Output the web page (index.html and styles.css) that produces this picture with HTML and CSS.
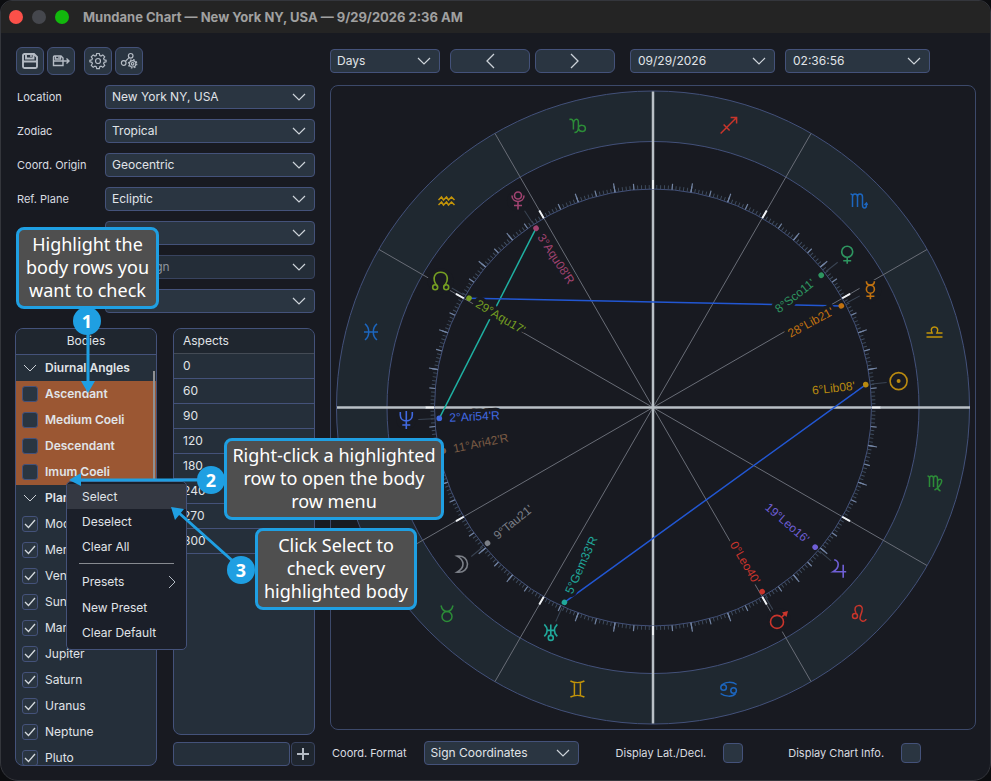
FILE: index.html
```html
<!DOCTYPE html>
<html lang="en">
<head>
<meta charset="utf-8">
<title>Mundane Chart</title>
<link rel="stylesheet" href="styles.css">
</head>
<body>
<div class="window">
  <header class="titlebar">
    <button class="light light-close" aria-label="Close"></button>
    <button class="light light-min" aria-label="Minimize"></button>
    <button class="light light-zoom" aria-label="Zoom"></button>
    <h1>Mundane Chart — New York NY, USA — 9/29/2026 2:36 AM</h1>
  </header>

  <main class="content">
    <section class="side">
      <div class="tools">
        <button class="tool" aria-label="Save">
          <svg width="20" height="20" viewBox="0 0 20 20"><path d="M4.500 3h9.500l3 3v9.500a1.500 1.500 0 0 1-1.500 1.500h-11a1.500 1.500 0 0 1-1.500-1.500v-11a1.500 1.500 0 0 1 1.500-1.500zM6 3v4.500h7.500v-4.500M3 10.500h14" stroke-width="1.900"/><path d="M11 4v2" stroke-width="1.500"/></svg>
        </button>
        <button class="tool" aria-label="Save as">
          <svg width="20" height="20" viewBox="0 0 20 20"><path d="M3.500 5h6.500l2 2v7.500h-9.500v-8.500a1 1 0 0 1 1-1zM4.500 5v3h5v-3M2.500 10h9.500" stroke-width="1.400"/><path d="M8 5.500v1.500M12 10h6M15.500 7.500l2.500 2.500-2.500 2.500" stroke-width="1.400"/></svg>
        </button>
        <button class="tool tool-gap" aria-label="Settings">
          <svg width="20" height="20" viewBox="0 0 20 20"><circle cx="10" cy="10" r="2.500" stroke-width="1.200"/><path d="M8.700 2.500h2.600l.5 2 1.200.5 1.800-1.100 1.900 1.900-1.100 1.800.5 1.200 2 .5v1.500l-2 .5-.5 1.200 1.100 1.800-1.900 1.900-1.800-1.100-1.200.5-.5 2h-2.600l-.5-2-1.200-.5-1.800 1.100-1.900-1.900 1.100-1.800-.5-1.200-2-.5v-1.500l2-.5.5-1.200-1.100-1.800 1.900-1.900 1.800 1.100 1.200-.5z" stroke-width="1.200"/></svg>
        </button>
        <button class="tool" aria-label="Aspect settings">
          <svg width="20" height="20" viewBox="0 0 20 20" stroke-width="1.200"><circle cx="4.700" cy="12" r="2.300"/><circle cx="11.700" cy="4.800" r="2.300"/><path d="M6.400 10.300l3.600-3.700"/><circle cx="13.600" cy="12.800" r="1.300"/><circle cx="13.600" cy="12.800" r="3.200"/><circle cx="13.600" cy="12.800" r="4.200" stroke-dasharray="1.600 1.700"/></svg>
        </button>
      </div>

      <div class="form">
        <label for="location">Location</label>
        <select id="location"><option>New York NY, USA</option></select>
        <label for="zodiac">Zodiac</label>
        <select id="zodiac"><option>Tropical</option></select>
        <label for="origin">Coord. Origin</label>
        <select id="origin"><option>Geocentric</option></select>
        <label for="plane">Ref. Plane</label>
        <select id="plane"><option>Ecliptic</option></select>
        <select class="unlabelled" aria-label="Houses"><option></option></select>
        <select class="unlabelled" aria-label="Start" disabled><option>Aries Sign</option></select>
        <select class="unlabelled" aria-label="Node"><option></option></select>
      </div>

      <div class="lists">
        <div class="panel bodies">
          <h2 class="panel-head">Bodies</h2>
          <div class="tree">
            <div class="row group"><svg class="twist" width="14" height="8" viewBox="0 0 14 8"><path d="M1 1l6 6 6-6"/></svg>Diurnal Angles</div>
            <label class="row picked"><input type="checkbox">Ascendant</label>
            <label class="row picked"><input type="checkbox">Medium Coeli</label>
            <label class="row picked"><input type="checkbox">Descendant</label>
            <label class="row picked"><input type="checkbox">Imum Coeli</label>
            <div class="row group"><svg class="twist" width="14" height="8" viewBox="0 0 14 8"><path d="M1 1l6 6 6-6"/></svg>Planets</div>
            <label class="row"><input type="checkbox" checked>Moon</label>
            <label class="row"><input type="checkbox" checked>Mercury</label>
            <label class="row"><input type="checkbox" checked>Venus</label>
            <label class="row"><input type="checkbox" checked>Sun</label>
            <label class="row"><input type="checkbox" checked>Mars</label>
            <label class="row"><input type="checkbox" checked>Jupiter</label>
            <label class="row"><input type="checkbox" checked>Saturn</label>
            <label class="row"><input type="checkbox" checked>Uranus</label>
            <label class="row"><input type="checkbox" checked>Neptune</label>
            <label class="row"><input type="checkbox" checked>Pluto</label>
            <span class="thumb"></span>
          </div>
        </div>

        <div class="aspects">
          <div class="panel aspect-panel">
            <table>
              <thead><tr><th scope="col">Aspects</th></tr></thead>
              <tbody>
                <tr><td>0</td></tr><tr><td>60</td></tr><tr><td>90</td></tr><tr><td>120</td></tr>
                <tr><td>180</td></tr><tr><td>240</td></tr><tr><td>270</td></tr><tr><td>300</td></tr>
              </tbody>
            </table>
          </div>
          <div class="add">
            <input type="text" aria-label="New aspect">
            <button aria-label="Add aspect"><svg width="14" height="14" viewBox="0 0 14 14"><path d="M7 1v12M1 7h12" stroke-width="2"/></svg></button>
          </div>
        </div>
      </div>
    </section>

    <section class="main">
      <div class="timebar">
        <select class="unit" aria-label="Step unit"><option>Days</option></select>
        <button class="step step-prev" aria-label="Previous"><svg width="10" height="16" viewBox="0 0 10 16"><path d="M9 1L2 8l7 7"/></svg></button>
        <button class="step" aria-label="Next"><svg width="10" height="16" viewBox="0 0 10 16"><path d="M1 1l7 7-7 7"/></svg></button>
        <select class="date" aria-label="Date"><option>09/29/2026</option></select>
        <select class="time" aria-label="Time"><option>02:36:56</option></select>
      </div>

      <div class="chart">
        <svg viewBox="-322 -321.500 644 643" role="img" aria-label="Chart wheel">
          <circle class="band" r="291.250"/>
          <circle class="ring" r="316.500"/>
          <circle class="ring" r="266"/>
          <g class="cusp">
            <path d="M-274-158L274 158M-158-274L158 274M158-274L-158 274M274-158L-274 158"/>
          </g>
          <path class="axis" d="M-316 0H317M0-316V316"/>
          <circle class="ring" r="218.500"/>
          <circle class="tick1" r="220.500" pathLength="360"/>
          <circle class="tick5" r="221.500" pathLength="360"/>
          <circle class="tick10" r="223" pathLength="360"/>
          <circle class="tick30" r="223" pathLength="360"/>

          <g class="aspect">
            <path class="teal" d="M-117-179.200L-213.700 10.800"/>
            <path class="blue" d="M-184-109.300L188.300-101.600M212.800-22.900L-88.600 194.800"/>
          </g>

          <g class="signs">
            <g class="earth" transform="translate(-75.600 -282)"><path d="M-8-6c3-1 4 1 4 4v6M-4-1c0-6 5-7 5-2v5c0 3-1 5-4 5M1 2c1-3 7-3 7 1 0 4-6 4-7 0"/></g>
            <g class="fire" transform="translate(75.600 -282)"><path d="M-8 8L8-8M2-8h6v6M-5-1l6 6"/></g>
            <g class="air" transform="translate(-206.500 -206.500)"><path d="M-8-1l3-3 2 3 3-3 2 3 3-3 3 3M-8 4l3-3 2 3 3-3 2 3 3-3 3 3"/></g>
            <g class="water" transform="translate(205.500 -206.500)"><path d="M-8-7c2 0 2 1 2 3v10M-6-4c0-4 5-4 5 0v10M-1-4c0-4 5-4 5 0v8c0 4 4 4 4 0v-1M6 4l2-2 1 2"/></g>
            <g class="water" transform="translate(-282 -75.600)"><path d="M-6-8c5 4 5 12 0 16M6-8c-5 4-5 12 0 16M-7 0h14"/></g>
            <g class="air" transform="translate(281.500 -75.600)"><path d="M-8 5h16M-8 1h5.500c-4-8 9-8 5 0h5.500"/></g>
            <g class="earth" transform="translate(281.500 75.600)"><path d="M-7-7c2 0 2 1 2 3v8M-5-4c0-4 4-4 4 0v8M-1-4c0-4 4-4 4 0v8c0 2 1 3 3 4M3-2c2-3 5-2 4 1-1 4-4 6-7 8"/></g>
            <g class="fire" transform="translate(206 206.500)"><circle cx="-4" cy="2" r="2.500"/><path d="M-3-1c-5-9 9-10 6-2-1 4-4 9 0 10 2 1 4-1 4-2"/></g>
            <g class="water" transform="translate(75.600 281)"><circle cx="-5" cy="-1" r="2.800"/><circle cx="5" cy="2" r="2.800"/><path d="M-7-3c3-4 11-4 15-1M7 5c-3 4-11 3-15 0"/></g>
            <g class="air" transform="translate(-75.600 281.500)"><path d="M-7-8c4 2 10 2 14 0M-7 8c4-2 10-2 14 0M-3-7v14M3-7v14"/></g>
            <g class="earth" transform="translate(-206 206)"><circle cy="3" r="5"/><path d="M-6-8c1 4 3 6 6 6s5-2 6-6"/></g>
            <g class="fire" transform="translate(-282 75.600)"><path d="M-7-3c-1-6 7-6 7 2v8c0 0 0-4 0-8 0-8 8-8 7-2"/></g>
          </g>

          <g class="body pluto"><g transform="rotate(-303.130)"><path class="lead" d="M-220 0h-15"/><circle class="dot" cx="-214" r="2.800"/><text x="-206" y="4">3°Aqu08'R</text></g>
            <g transform="translate(-135 -207)"><circle class="mask" r="11"/><path d="M-6-5c0 8 12 8 12 0M0 1v8M-4 5h8"/><circle cy="-5" r="3.500"/></g></g>
          <g class="body node"><g transform="rotate(-329.280)"><path class="lead" d="M-220 0h-15"/><circle class="dot" cx="-214" r="2.800"/><text x="-205" y="4">29°Aqu17'</text></g>
            <g transform="translate(-212.300 -126.200)"><circle class="mask" r="13"/><path d="M-3.500 5C-10-4-5-9 0-9s10 5 3.500 14"/><circle cx="-5.500" cy="6" r="2.500"/><circle cx="5.500" cy="6" r="2.500"/></g></g>
          <g class="body neptune"><g transform="rotate(-2.900)"><path class="lead" d="M-220 0h-15"/><circle class="dot" cx="-214" r="2.800"/><text x="-204" y="4">2°Ari54'R</text></g>
            <g transform="translate(-246.700 12.500)"><circle class="mask" r="10"/><path d="M-6-8v3c0 8 12 8 12 0v-3M0-9v18M-4 5h8"/></g></g>
          <g class="body chiron"><g transform="rotate(-11.700)"><circle class="dot" cx="-214" r="2.800"/><text x="-204" y="4">11°Ari42'R</text></g></g>
          <g class="body moon"><g transform="rotate(-39.350)"><path class="lead" d="M-220 0h-15"/><circle class="dot" cx="-214" r="2.800"/><text x="-204" y="4">9°Tau21'</text></g>
            <g transform="translate(-191 156.600)"><path d="M-5-8c14-2 14 18 0 16 8-4 8-12 0-16z"/></g></g>
          <g class="body uranus"><g transform="rotate(-65.550)"><path class="lead" d="M-220 0h-15"/><circle class="dot" cx="-214" r="2.800"/><text x="-204" y="4">5°Gem33'R</text></g>
            <g transform="translate(-102.200 224.900)"><path d="M-6.500-8c4 4 4 8 0 12M6.500-8c-4 4-4 8 0 12M-4-2h8M0-8v11"/><circle cy="5.500" r="2.500"/></g></g>
          <g class="body mars"><g transform="rotate(59.330)"><path class="lead" d="M220 0h15"/><circle class="dot" cx="214" r="2.800"/><text class="far" x="204" y="4">0°Leo40'</text></g>
            <g transform="translate(126 212.400)"><circle class="mask" r="12"/><circle cx="-2" cy="2" r="6.500"/><path d="M3-3l3-3"/><path class="dot" d="M3-7.500l6-1.500-1.500 6z"/></g></g>
          <g class="body jupiter"><g transform="rotate(40.730)"><path class="lead" d="M220 0h15"/><circle class="dot" cx="214" r="2.800"/><text class="far" x="204" y="4">19°Leo16'</text></g>
            <g transform="translate(187.200 161.200)"><path d="M-6-9c5 1 6 8-1 12h13M3-4v13"/></g></g>
          <g class="body sun"><g transform="rotate(-6.130)"><path class="lead" d="M220 0h15"/><circle class="dot" cx="214" r="2.800"/><text class="far" x="203" y="4">6°Lib08'</text></g>
            <g transform="translate(245.600 -26.400)"><circle r="8.500"/><circle class="dot" r="2"/></g></g>
          <g class="body mercury"><g transform="rotate(-28.350)"><path class="lead" d="M220 0h15"/><circle class="dot" cx="214" r="2.800"/><text class="far" x="204" y="4">28°Lib21'</text></g>
            <g transform="translate(217.400 -117.300)"><circle class="mask" r="11"/><circle cy="-1" r="4"/><path d="M-4-9c0 5 8 5 8 0M0 3v6M-4 6h8"/></g></g>
          <g class="body venus"><g transform="rotate(-38.180)"><path class="lead" d="M220 0h15"/><circle class="dot" cx="214" r="2.800"/><text class="far" x="204" y="4">8°Sco11'</text></g>
            <g transform="translate(194.200 -152.700)"><circle cy="-3" r="5.500"/><path d="M0 3v6M-4 6h8"/></g></g>
        </svg>
      </div>

      <div class="footbar">
        <label for="format">Coord. Format</label>
        <select id="format"><option>Sign Coordinates</option></select>
        <label for="lat">Display Lat./Decl.</label>
        <input id="lat" type="checkbox">
        <label for="info">Display Chart Info.</label>
        <input id="info" type="checkbox">
      </div>
    </section>
  </main>

  <menu class="context">
    <li><button class="active">Select</button></li>
    <li><button>Deselect</button></li>
    <li><button>Clear All</button></li>
    <li class="rule" role="separator"></li>
    <li><button class="submenu">Presets<svg width="8" height="14" viewBox="0 0 8 14"><path d="M1 1l6 6-6 6"/></svg></button></li>
    <li><button>New Preset</button></li>
    <li><button>Clear Default</button></li>
  </menu>

  <svg class="arrows" width="300" height="400" viewBox="0 250 300 400">
    <path d="M88 330v54M205 480H78M235 563L179 513"/>
    <path class="tip" d="M81 381h14l-7 12zM81 473v13l-12-6zM171 507l13 2-9 11z"/>
  </svg>
  <p class="callout callout-1">Highlight the<br>body rows you<br>want to check</p>
  <p class="callout callout-2">Right-click a highlighted<br>row to open the body<br>row menu</p>
  <p class="callout callout-3">Click Select to<br>check every<br>highlighted body</p>
  <span class="badge badge-1">1</span>
  <span class="badge badge-2">2</span>
  <span class="badge badge-3">3</span>
</div>
</body>
</html>
```
FILE: styles.css
```css
:root {
  --bg: #181a21;
  --field: #2a3541;
  --list: #252f3a;
  --head: #1f262f;
  --line: #44527a;
  --text: #e0e4e8;
  --icon: #b4bbc4;
  --call: #1f9fe2;
  --chevron: url("data:image/svg+xml,%3Csvg xmlns='http://www.w3.org/2000/svg' width='14' height='8' viewBox='0 0 14 8'%3E%3Cpath d='M1 1l6 6 6-6' fill='none' stroke='%23ccd2d8' stroke-width='1.2'/%3E%3C/svg%3E");
}

* { box-sizing: border-box; }

body {
  margin: 0;
  background: #0c0d10;
  color: var(--text);
  font: 12px/16px Inter, "Liberation Sans", sans-serif;
}

button, select, input { font: inherit; color: inherit; margin: 0; }

.window {
  position: relative;
  display: flex;
  flex-direction: column;
  min-height: 100vh;
  background: var(--bg);
  border: 1px solid #34363c;
  border-radius: 12px 12px 18px 18px;
  overflow: hidden;
}

.titlebar {
  display: flex;
  align-items: center;
  gap: 9px;
  height: 32px;
  padding: 0 8px;
  background: #242424;
}

.titlebar h1 {
  margin: 0 0 0 5px;
  font-size: 13px;
  font-weight: 700;
  color: #a0a0a0;
}

.light {
  width: 14px;
  height: 14px;
  padding: 0;
  border: 0;
  border-radius: 50%;
}
.light-close { background: #fb5049; }
.light-min { background: #45474d; }
.light-zoom { background: #12b80d; }

.content {
  display: flex;
  gap: 15px;
  padding: 14px;
}

.side { width: 300px; }

.tools { display: flex; gap: 3px; padding-left: 1px; }

.tool {
  display: grid;
  place-items: center;
  width: 28px;
  height: 28px;
  padding: 0;
  background: var(--field);
  border: 1px solid var(--line);
  border-radius: 6px;
}
.tool-gap { margin-left: 6px; }

svg { fill: none; stroke: var(--icon); display: block; }

.form {
  display: grid;
  grid-template-columns: 90px 1fr;
  row-gap: 10px;
  align-items: center;
  margin-top: 10px;
}
.form label { padding-left: 2px; }
.form label, .footbar label { font-size: 11px; color: #d8dce0; white-space: nowrap; }
.unlabelled { grid-column: 2; }

select {
  appearance: none;
  width: 100%;
  height: 24px;
  padding: 0 6px;
  background: var(--field) var(--chevron) no-repeat right 8px center;
  border: 1px solid var(--line);
  border-radius: 4px;
}
select:disabled { color: #8d949c; opacity: 1; border-color: #38435f; background-color: #242d38; }

.lists {
  display: grid;
  grid-template-columns: 142px 142px;
  justify-content: space-between;
  height: 438px;
  margin-top: 15px;
}

.panel {
  background: var(--list);
  border: 1px solid var(--line);
  border-radius: 8px;
  overflow: hidden;
}

.bodies { height: 438px; }

.panel-head {
  margin: 0;
  height: 26px;
  font-size: 12px;
  line-height: 24px;
  font-weight: 400;
  text-align: center;
  background: var(--head);
  border-bottom: 1px solid var(--line);
}

.tree { position: relative; }

.row {
  display: flex;
  align-items: center;
  gap: 7px;
  height: 26px;
  padding-left: 6px;
}
.group { font-weight: 600; }
.twist { margin: 0 1px; }
.group .twist { stroke: #ccd2d8; }
.picked { background: #9b5733; font-weight: 600; }

input[type="checkbox"] {
  appearance: none;
  flex: none;
  width: 16px;
  height: 16px;
  background: var(--field) no-repeat center;
  border: 1px solid var(--line);
  border-radius: 3px;
}
input[type="checkbox"]:checked {
  background-image: url("data:image/svg+xml,%3Csvg xmlns='http://www.w3.org/2000/svg' width='12' height='10' viewBox='0 0 12 10'%3E%3Cpath d='M1 5l3.5 3.500L11 1' fill='none' stroke='%23d5dade' stroke-width='1.3'/%3E%3C/svg%3E");
}

.thumb {
  position: absolute;
  top: 16px;
  right: 1px;
  width: 2px;
  height: 110px;
  background: #8f9092;
}

.aspects { display: flex; flex-direction: column; gap: 7px; }
.aspect-panel { flex: 1; }

table { width: 100%; border-spacing: 0; }
th, td {
  height: 25px;
  padding: 0 9px;
  text-align: left;
  font-weight: 400;
  border-bottom: 1px solid var(--line);
}
th { background: var(--head); border-bottom-color: #444b55; }

.add { display: flex; gap: 1px; }
.add input {
  flex: 1;
  min-width: 0;
  height: 24px;
  background: var(--list);
  border: 1px solid var(--line);
  border-radius: 4px;
}
.add button {
  display: grid;
  place-items: center;
  width: 24px;
  padding: 0;
  background: var(--head);
  border: 1px solid #38435f;
  border-radius: 4px;
}

.main { flex: 1; min-width: 0; }

.timebar { display: flex; margin-top: 2px; }
.unit { width: 110px; margin-right: 10px; }
.date { width: 145px; margin: 0 10px 0 15px; }
.time { width: 145px; }
.date, .time { padding-left: 7px; }

.step {
  display: grid;
  place-items: center;
  width: 80px;
  height: 24px;
  padding: 0;
  background: var(--field);
  border: 1px solid var(--line);
  border-radius: 6px;
}
.step-prev { margin-right: 5px; }
.step svg { stroke: #ccd2d8; stroke-width: 1.300; }

.chart {
  margin-top: 12px;
  border: 1px solid #3c496a;
  border-radius: 8px;
}
.chart svg { width: 100%; }

.band { stroke: #1f2830; stroke-width: 50.500; }
.ring { stroke: #43517a; }
.cusp { stroke: #696d77; }
.axis { stroke: #b9c0c6; stroke-width: 2.500; }
.tick1 { stroke: #3f4d5f; stroke-width: 4; stroke-dasharray: 0.250 0.750; stroke-dashoffset: 0.125; }
.tick5 { stroke: #7284a3; stroke-width: 6; stroke-dasharray: 0.300 4.700; stroke-dashoffset: 0.150; }
.tick10 { stroke: #7284a3; stroke-width: 9; stroke-dasharray: 0.300 9.700; stroke-dashoffset: 0.150; }
.tick30 { stroke: #f0f2f4; stroke-width: 9; stroke-dasharray: 0.500 29.500; stroke-dashoffset: 0.250; }

.aspect { stroke-width: 1.500; }
.teal { stroke: #1fb0a2; }
.blue { stroke: #2257d3; }

.signs { stroke-width: 1.500; }
.earth { stroke: #2c8c38; }
.fire { stroke: #c9352b; }
.air { stroke: #c29409; }
.water { stroke: #1c66bf; }

.body { stroke: var(--c); stroke-width: 1.600; }
.body text {
  fill: var(--c);
  stroke: var(--bg);
  stroke-width: 7;
  stroke-linejoin: round;
  paint-order: stroke;
  font: 12px "Liberation Sans", sans-serif;
}
.body .far { text-anchor: end; }
.dot { fill: var(--c); stroke: none; }
.mask { fill: var(--bg); stroke: none; }
.body .lead { stroke: #3a4453; stroke-width: 1; }
.pluto { --c: #a04370; }
.node { --c: #759e22; }
.neptune { --c: #4169e1; }
.chiron { --c: #7a5b44; }
.moon { --c: #7b7f87; }
.uranus { --c: #20a89b; }
.mars { --c: #cb352c; }
.jupiter { --c: #6f5fd6; }
.sun { --c: #b98a10; }
.mercury { --c: #c17210; }
.venus { --c: #2e9560; }

.footbar { display: flex; align-items: center; margin-top: 11px; padding-left: 2px; }
.footbar select { width: 155px; margin: 0 37px 0 17px; }
.footbar input[type="checkbox"] { width: 20px; height: 20px; margin: 0 45px 0 17px; border-radius: 4px; }
.footbar input[type="checkbox"]:last-child { margin-right: 0; }

.context {
  position: absolute;
  left: 65px;
  top: 480px;
  width: 121px;
  margin: 0;
  padding: 2px 0 4px;
  list-style: none;
  background: #1b1f29;
  border: 1px solid var(--line);
  border-radius: 5px;
}
.context button {
  display: flex;
  align-items: center;
  justify-content: space-between;
  width: 100%;
  height: 25px;
  padding: 0 10px 0 15px;
  background: none;
  border: 0;
  text-align: left;
}
.context .active { background: #343842; }
.context .submenu { height: 26px; }
.context .rule { height: 1px; margin: 4px 12px 5px; background: #878a90; }

.arrows { position: absolute; left: -1px; top: 249px; stroke: var(--call); stroke-width: 3; }
.arrows .tip { fill: var(--call); stroke: none; }

.callout {
  position: absolute;
  margin: 0;
  padding: 3px 0 4px;
  background: #4f4f4f;
  border: 3px solid var(--call);
  border-radius: 8px;
  color: #fff;
  font: 18px/23px "Noto Sans", "Open Sans", sans-serif;
  text-align: center;
  white-space: nowrap;
}
.callout-1 { left: 15px; top: 226px; width: 143px; }
.callout-2 { left: 223px; top: 437px; width: 220px; }
.callout-3 { left: 254px; top: 527px; width: 162px; }

.badge {
  position: absolute;
  width: 28px;
  height: 28px;
  border-radius: 50%;
  background: var(--call);
  color: #fff;
  font: 700 18px/28px "Noto Sans", "Open Sans", sans-serif;
  text-align: center;
}
.badge-1 { left: 72px; top: 306px; }
.badge-2 { left: 196px; top: 465px; }
.badge-3 { left: 226px; top: 555px; }
```
